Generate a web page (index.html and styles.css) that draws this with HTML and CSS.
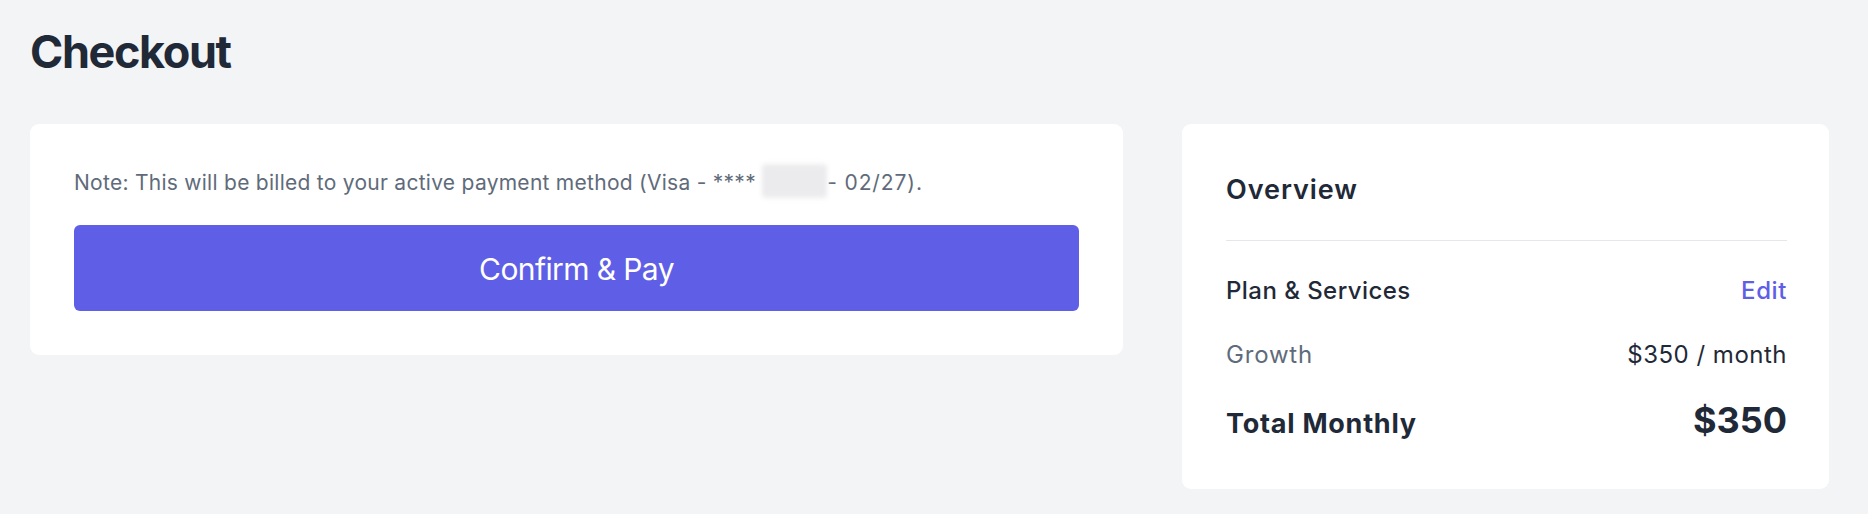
FILE: index.html
```html
<!DOCTYPE html>
<html lang="en">
<head>
<meta charset="utf-8">
<title>Checkout</title>
<link rel="stylesheet" href="styles.css">
</head>
<body>
<main class="page">
  <h1 class="title">Checkout</h1>
  <div class="layout">
    <section class="card pay">
      <p class="note">Note: This will be billed to your active payment method (Visa - **** <span class="redact"></span><span class="expiry">- 02/27).</span></p>
      <button class="confirm" type="button">Confirm &amp; Pay</button>
    </section>
    <aside class="card overview">
      <h2 class="ov-title">Overview</h2>
      <div class="row head"><span>Plan &amp; Services</span><a class="edit" href="#">Edit</a></div>
      <div class="row plan"><span class="muted">Growth</span><span>$350 / month</span></div>
      <div class="row total"><span class="total-label">Total Monthly</span><span class="total-amt">$350</span></div>
    </aside>
  </div>
</main>
</body>
</html>
```
FILE: styles.css
```css
html, body {
  margin: 0;
  padding: 0;
}
body {
  background: #f3f4f6;
  font-family: Inter, "Noto Sans", "Liberation Sans", sans-serif;
  color: #1f2937;
}
.page {
  padding: 25px 39px 0 30px;
}
.title {
  margin: 0;
  font-size: 45px;
  line-height: 54px;
  font-weight: 700;
  letter-spacing: -1.4px;
  color: #1f2937;
}
.layout {
  margin-top: 45px;
  display: grid;
  grid-template-columns: 1093px 647px;
  column-gap: 59px;
  align-items: start;
}
.card {
  background: #ffffff;
  border-radius: 9px;
  padding: 44px;
}
.note {
  margin: 0;
  font-size: 21px;
  line-height: 30px;
  letter-spacing: 0.27px;
  color: #5f6b7a;
}
.redact {
  display: inline-block;
  width: 65px;
  height: 30px;
  margin: 0;
  vertical-align: top;
  background: #ebebed;
  border-radius: 3px;
  filter: blur(2.5px);
  transform: translateY(-2px) scale(1, 1.12);
}
.expiry {
  letter-spacing: 0.9px;
}
.confirm {
  display: block;
  width: 100%;
  margin-top: 27px;
  height: 86px;
  border: none;
  border-radius: 6px;
  background: #5f5ee6;
  color: #ffffff;
  font-family: inherit;
  font-size: 30px;
  line-height: 42px;
  font-weight: 400;
  letter-spacing: -0.6px;
  padding-top: 2px;
}
.overview {
  padding-right: 42px;
  padding-bottom: 41px;
}
.ov-title {
  margin: 0;
  font-size: 27px;
  line-height: 42px;
  font-weight: 600;
  letter-spacing: 0.95px;
  padding-top: 1px;
  padding-bottom: 29px;
  border-bottom: 1.5px solid #e5e7eb;
}
.row {
  display: flex;
  justify-content: space-between;
  align-items: baseline;
}
.head {
  margin-top: 32px;
  font-size: 24px;
  line-height: 36px;
  font-weight: 500;
  letter-spacing: 0.45px;
}
.edit {
  color: #5f5ee6;
  text-decoration: none;
  font-weight: 500;
  letter-spacing: 0.6px;
}
.plan {
  margin-top: 28px;
  font-size: 24px;
  line-height: 36px;
  letter-spacing: 0.5px;
}
.muted {
  color: #5f6b7a;
  letter-spacing: 0.8px;
}
.total {
  margin-top: 23px;
  line-height: 48px;
}
.total-label {
  font-size: 27px;
  font-weight: 700;
  letter-spacing: 0.75px;
}
.total-amt {
  font-size: 36px;
  font-weight: 700;
}
```
